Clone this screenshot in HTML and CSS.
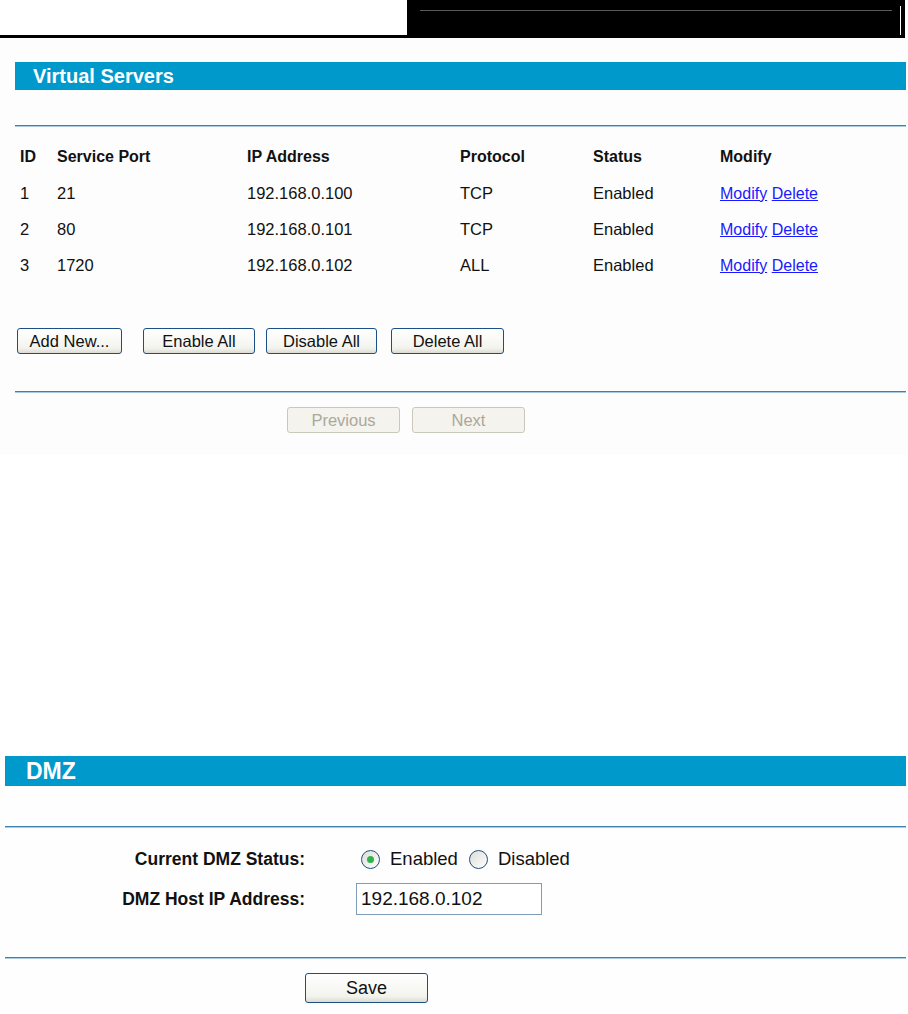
FILE: index.html
```html
<!DOCTYPE html>
<html lang="en">
<head>
  <meta charset="UTF-8">
  <title>Virtual Servers / DMZ</title>
  <link rel="stylesheet" href="styles.css">
</head>
<body>

  <!-- Page header strip -->
  <div class="page-top">
    <div class="page-top-left"></div>
    <div class="page-top-right">
      <div class="rule"></div>
      <div class="tick"></div>
    </div>
  </div>

  <!-- Virtual Servers screen -->
  <div class="panel panel-vs">
    <div class="title-bar">Virtual Servers</div>
    <div class="divider"></div>

    <div class="vs-table">
      <div class="vs-row vs-head">
        <span>ID</span><span>Service Port</span><span>IP Address</span><span>Protocol</span><span>Status</span><span>Modify</span>
      </div>
      <div class="vs-row">
        <span>1</span><span>21</span><span>192.168.0.100</span><span>TCP</span><span>Enabled</span>
        <span><a href="#">Modify</a> <a href="#">Delete</a></span>
      </div>
      <div class="vs-row">
        <span>2</span><span>80</span><span>192.168.0.101</span><span>TCP</span><span>Enabled</span>
        <span><a href="#">Modify</a> <a href="#">Delete</a></span>
      </div>
      <div class="vs-row">
        <span>3</span><span>1720</span><span>192.168.0.102</span><span>ALL</span><span>Enabled</span>
        <span><a href="#">Modify</a> <a href="#">Delete</a></span>
      </div>
    </div>

    <div class="btn-row">
      <button class="btn btn-add">Add New...</button>
      <button class="btn btn-enable">Enable All</button>
      <button class="btn btn-disable">Disable All</button>
      <button class="btn btn-delete">Delete All</button>
    </div>

    <div class="divider divider-bottom"></div>

    <div class="nav-row">
      <button class="btn btn-off" disabled>Previous</button>
      <button class="btn btn-off" disabled>Next</button>
    </div>
  </div>

  <!-- DMZ screen -->
  <div class="panel panel-dmz">
    <div class="title-bar title-dmz">DMZ</div>
    <div class="divider"></div>

    <div class="dmz-form">
      <label class="dmz-label">Current DMZ Status:</label>
      <div class="dmz-value">
        <span class="radio checked"></span><span class="radio-text">Enabled</span>
        <span class="radio"></span><span class="radio-text">Disabled</span>
      </div>
      <label class="dmz-label">DMZ Host IP Address:</label>
      <div class="dmz-value">
        <input type="text" class="ip-input" value="192.168.0.102">
      </div>
    </div>

    <div class="divider divider-dmz"></div>

    <div class="save-row">
      <button class="btn btn-save">Save</button>
    </div>
  </div>

</body>
</html>
```

FILE: styles.css
```css
* {
  margin: 0;
  padding: 0;
  box-sizing: border-box;
}
body {
  background-color: #ffffff;
  font-family: "Liberation Sans", Arial, sans-serif;
  color: #111;
}

/* Header strip */
.page-top {
  display: flex;
  height: 38px;
}
.page-top-left {
  width: 407px;
  border-bottom: 3px solid #000;
}
.page-top-right {
  width: 498px;
  background-color: #000;
  display: flex;
  align-items: flex-start;
  padding: 10px 0 0 13px;
}
.rule {
  width: 472px;
  height: 1px;
  background-color: #5a5a5a;
}
.tick {
  width: 1px;
  height: 29px;
  margin: -4px 0 0 8px;
  background-color: #fff;
}

/* Shared panel pieces */
.panel {
  background-color: #fdfdfd;
}
.title-bar {
  height: 28px;
  background-color: #0099cc;
  color: #fff;
  font-size: 20px;
  font-weight: bold;
  line-height: 28px;
  padding-left: 18px;
}
.divider {
  height: 2px;
  border-top: 1px solid #3f82ad;
  background-color: #a8cbe0;
}

/* Virtual servers */
.panel-vs {
  padding: 24px 2px 22px 15px;
}
.panel-vs .divider {
  margin-top: 35px;
}
.vs-table {
  margin-top: 12px;
}
.vs-row {
  display: grid;
  grid-template-columns: 37px 190px 213px 133px 127px 1fr;
  height: 36px;
  align-items: center;
  font-size: 16.5px;
}
.vs-row span {
  padding-left: 5px;
}
.vs-head {
  font-size: 16px;
  font-weight: bold;
}
.vs-row a {
  color: #1a1aff;
  font-size: 16px;
}

.btn {
  font-family: "Liberation Sans", Arial, sans-serif;
  font-size: 16.5px;
  color: #111;
  height: 26px;
  border: 1px solid #1c4f85;
  border-radius: 3px;
  background: linear-gradient(#ffffff, #f3f3ee 80%, #dcdcd2);
}
.btn-row {
  display: flex;
  margin-top: 45px;
  padding-left: 2px;
}
.btn-add { width: 105px; margin-right: 21px; }
.btn-enable { width: 112px; margin-right: 11px; }
.btn-disable { width: 111px; margin-right: 14px; }
.btn-delete { width: 113px; }

.panel-vs .divider-bottom {
  margin-top: 37px;
}
.nav-row {
  display: flex;
  gap: 12px;
  margin-top: 14px;
  padding-left: 272px;
}
.btn-off {
  width: 113px;
  color: #aca899;
  border-color: #cac8bb;
  background: #f4f3ee;
}

/* DMZ */
.panel-dmz {
  margin-top: 301px;
  padding: 0 2px 10px 5px;
  background-color: #fefefe;
}
.title-dmz {
  height: 30px;
  line-height: 30px;
  font-size: 23px;
  padding-left: 21px;
}
.panel-dmz .divider {
  margin-top: 40px;
}
.dmz-form {
  display: grid;
  grid-template-columns: 300px 1fr;
  column-gap: 51px;
  row-gap: 8px;
  align-items: center;
  padding-top: 15px;
}
.dmz-label {
  text-align: right;
  font-size: 17.5px;
  font-weight: bold;
  height: 32px;
  line-height: 32px;
}
.dmz-value {
  display: flex;
  align-items: center;
  font-size: 18.5px;
}
.radio {
  width: 19px;
  height: 19px;
  border: 1px solid #1c5180;
  border-radius: 50%;
  background: linear-gradient(135deg, #dcdcd6, #ffffff);
  margin: 0 10px 0 11px;
  display: flex;
  align-items: center;
  justify-content: center;
}
.radio:first-child {
  margin-left: 5px;
}
.radio.checked::after {
  content: "";
  width: 7px;
  height: 7px;
  border-radius: 50%;
  background-color: #2fb34a;
}
.ip-input {
  width: 186px;
  height: 32px;
  border: 1px solid #7f9db9;
  font-family: "Liberation Sans", Arial, sans-serif;
  font-size: 19px;
  padding-left: 4px;
  color: #111;
}
.panel-dmz .divider-dmz {
  margin-top: 42px;
}
.save-row {
  padding-left: 300px;
  margin-top: 14px;
}
.btn-save {
  width: 123px;
  height: 30px;
  font-size: 18px;
}
```
